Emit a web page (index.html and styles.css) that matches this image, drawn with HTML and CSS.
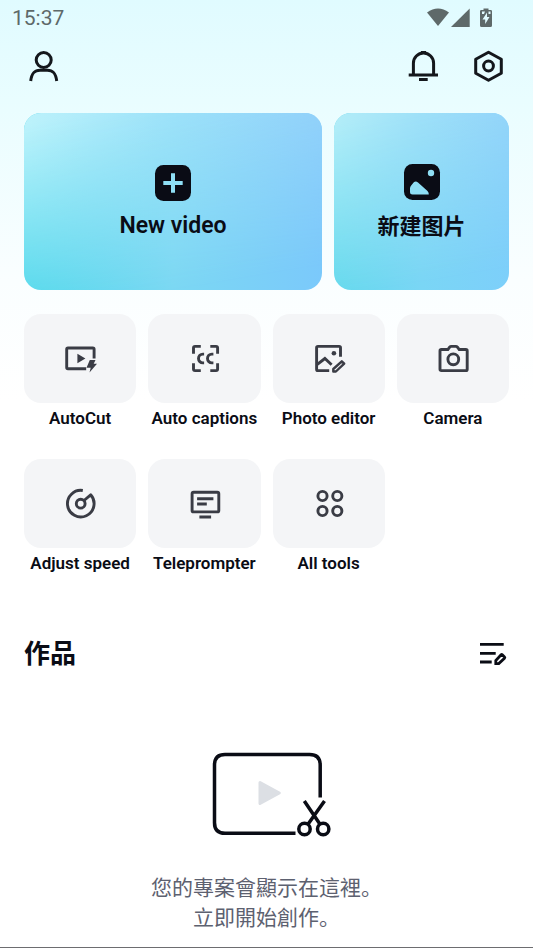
FILE: index.html
```
<!DOCTYPE html>
<html lang="en">
<head>
<meta charset="utf-8">
<meta name="viewport" content="width=device-width, initial-scale=1">
<title>作品</title>
<link rel="stylesheet" href="styles.css">
</head>
<body>
<div class="status">
  <time>15:37</time>
  <svg class="status-icons" viewBox="0 0 66 20" aria-hidden="true">
    <path d="M0 4.500Q11-3.500 22 4.500L11 18Z"/>
    <path d="M24 19L42.700 .5V19Z"/>
    <path fill-rule="evenodd" d="M56.500 .5h5v1.500h2.200q1.300 0 1.300 1.300v14.200q0 1.500-1.500 1.500h-9q-1.500 0-1.500-1.500V3.300q0-1.300 1.300-1.300h2.200zM60 4.500l-4.500 7h2.700v4.500l4.300-7h-2.500zM55 3.500v2.500h2l1-2.500zM61.500 3.500v2.500h2v-2.500z"/>
  </svg>
</div>
<header class="topbar">
  <button class="icon-button" aria-label="Profile">
    <svg viewBox="0 0 40 40"><circle cx="19.700" cy="14" r="7.500"/><path d="M6.700 35C7.700 27 10.500 24.200 16 24.200h7.400C29 24.200 31.700 27 32.700 35"/></svg>
  </button>
  <nav class="actions">
    <button class="icon-button" aria-label="Notifications">
      <svg viewBox="0 0 40 40"><path d="M10.400 29V17.200a10.100 10.100 0 0 1 20.200 0V29M5.700 29H35M16 33.400h8.700M17.800 6.500h5.400"/></svg>
    </button>
    <button class="icon-button" aria-label="Settings">
      <svg viewBox="0 0 40 40"><path stroke-linejoin="round" d="M19.500 6.200L32.300 13.200V27.200L19.500 34.200L6.700 27.200V13.200Z"/><circle cx="19.500" cy="20" r="4.900"/></svg>
    </button>
  </nav>
</header>
<main>
  <section class="create">
    <button class="card card-video">
      <svg viewBox="0 0 36 36" aria-hidden="true"><rect width="36" height="36" rx="8.500"/><path class="cut-line" d="M18 8.300v19.400M8.300 18h19.400"/></svg>
      <span>New video</span>
    </button>
    <button class="card card-image">
      <svg viewBox="0 0 36 36" aria-hidden="true"><rect width="36" height="36" rx="8.500"/><circle class="cut" cx="27" cy="9" r="3.200"/><path class="cut" d="M6 24.500q0-1.500 1-2.700l2.600-3.200q2-2.200 4.400-.2L23.500 27q1.500 1.500 1.300 3.500H8.500Q6 30.500 6 28z"/></svg>
      <span>新建图片</span>
    </button>
  </section>
  <section class="tools">
    <button class="tool">
      <span class="tile"><svg viewBox="0 0 33 33" aria-hidden="true"><path d="M30.100 16.500V7.300q0-1.300-1.300-1.300H4q-1.300 0-1.300 1.300v18.100q0 1.300 1.300 1.300h18.200"/><path class="solid" d="M13.400 11.700v9.600L21.400 16.500zM25.800 18h5.700l-1.800 3.700h3.300L25.500 30.500l1.200-4.700H22.500z"/></svg></span>
      <span>AutoCut</span>
    </button>
    <button class="tool">
      <span class="tile"><svg viewBox="0 0 33 33" aria-hidden="true"><path d="M5.500 11.700V6q0-1.600 1.600-1.600h5.700M22.300 4.400H28q1.600 0 1.600 1.600v5.700M29.600 21.300V27q0 1.600-1.600 1.600h-5.700M12.800 28.600H7.100q-1.600 0-1.600-1.600v-5.700M16.100 12.100h-1.200a4.400 4.400 0 0 0 0 8.800h1.200M25.400 12.100h-1.500a4.400 4.400 0 0 0 0 8.800h1.500"/></svg></span>
      <span>Auto captions</span>
    </button>
    <button class="tool">
      <span class="tile"><svg viewBox="0 0 33 33" aria-hidden="true"><path d="M28.500 14.700V5.800q0-1.400-1.400-1.400H6q-1.400 0-1.400 1.400v21.400q0 1.400 1.400 1.400h11.200M5 22.700L12.900 16.500L19.600 22.700"/><circle class="solid" cx="21.900" cy="11.300" r="2.300"/><path class="thin" d="M29.800 19.300l2.400 2.400L23.900 29.500H21.300V27z"/></svg></span>
      <span>Photo editor</span>
    </button>
    <button class="tool">
      <span class="tile"><svg viewBox="0 0 33 33" aria-hidden="true"><path d="M5.400 7.500h6.500l1.700-2.300q.7-.8 1.700-.8h4.500q1 0 1.700.8l1.700 2.300h6.600q1.400 0 1.400 1.400v18.300q0 1.400-1.400 1.400H5.400Q4 28.600 4 27.200V8.900q0-1.400 1.400-1.400z"/><circle cx="17.300" cy="17.300" r="5.400"/></svg></span>
      <span>Camera</span>
    </button>
    <button class="tool">
      <span class="tile"><svg viewBox="0 0 33 33" aria-hidden="true"><path stroke-linejoin="round" d="M18.800 3.500A13.300 13.300 0 1 0 26.700 7.800L20 13.500"/><circle cx="16.700" cy="16.700" r="4.400"/></svg></span>
      <span>Adjust speed</span>
    </button>
    <button class="tool">
      <span class="tile"><svg viewBox="0 0 33 33" aria-hidden="true"><rect x="4.100" y="5.300" width="26.700" height="19.600" rx="1.500"/><path d="M9.100 11.700h16.300M9.100 17h9.700M11.400 30h11.700"/></svg></span>
      <span>Teleprompter</span>
    </button>
    <button class="tool">
      <span class="tile"><svg viewBox="0 0 33 33" aria-hidden="true"><circle cx="10.500" cy="9" r="4.600"/><circle cx="25.300" cy="9" r="4.600"/><circle cx="10.500" cy="24" r="4.600"/><circle cx="25.300" cy="24" r="4.600"/></svg></span>
      <span>All tools</span>
    </button>
  </section>
  <section class="works">
    <div class="works-head">
      <h1>作品</h1>
      <button class="edit-button" aria-label="Edit"><svg viewBox="0 0 32 32"><path d="M3 7.300h23.700M3 16.300h15.700M3 25h11.700M25.300 17.800l2.200 2.200q.6.600 0 1.200L21.800 26.600h-3V23.600L24.100 17.800q.6-.6 1.200 0z"/></svg></button>
    </div>
    <div class="empty">
      <svg viewBox="0 0 128 92" aria-hidden="true"><path d="M117.200 49.500V17q0-10.600-10.600-10.600H22Q11.500 6.400 11.500 17v57.700q0 10.600 10.500 10.600h70.500"/><path class="play" d="M57 34.500L76.300 45L57 55.500z"/><path d="M101.300 53L117.200 76.500M121.500 53L104.800 76.500"/><circle cx="101.500" cy="81" r="5.700"/><circle cx="120.200" cy="81" r="5.700"/></svg>
      <p>您的專案會顯示在這裡。<br>立即開始創作。</p>
    </div>
  </section>
</main>
</body>
</html>
```
FILE: styles.css
```
* { box-sizing: border-box; }

body {
  margin: 0;
  min-height: 100vh;
  color: #0a0c15;
  background: linear-gradient(#e0fbff 0, #e9fdff 100px, #fafeff 280px, #fff 400px);
  border-bottom: 1px solid #6d6d70;
  font-family: Roboto, "Noto Sans CJK SC", sans-serif;
}

button {
  padding: 0;
  border: 0;
  background: none;
  color: inherit;
  font: inherit;
  cursor: pointer;
}

svg { display: block; overflow: visible; }

.status {
  display: flex;
  justify-content: space-between;
  align-items: center;
  height: 36px;
  padding: 0 40px 0 12px;
  color: #5e6969;
  font-size: 21px;
}

.status-icons { width: 66px; height: 20px; fill: currentColor; }

.topbar {
  display: flex;
  justify-content: space-between;
  padding: 10px 24px 0;
}

.actions { display: flex; gap: 26px; }

.icon-button svg {
  width: 40px;
  height: 40px;
  fill: none;
  stroke: #14171c;
  stroke-width: 3;
}

main { padding: 27px 24px 0; }

.create { display: flex; gap: 12px; }

.card {
  position: relative;
  display: flex;
  flex-direction: column;
  align-items: center;
  justify-content: center;
  gap: 11px;
  height: 177px;
  padding-top: 2px;
  border-radius: 17px;
  overflow: hidden;
  isolation: isolate;
  font-size: 22px;
  font-weight: 600;
  line-height: 28px;
}

/* Upper colour band, faded into the lower one */
.card::before {
  content: "";
  position: absolute;
  inset: 0;
  z-index: -1;
  -webkit-mask-image: linear-gradient(170deg, #000 5%, transparent 90%);
  mask-image: linear-gradient(170deg, #000 5%, transparent 90%);
}

.card svg { width: 36px; height: 36px; fill: #0a0c15; }
.card .cut { fill: #8fdff5; }
.card .cut-line { fill: none; stroke: #8fdff5; stroke-width: 4; }

.card-video {
  flex: 298;
  font-size: 23px;
  background: linear-gradient(90deg, #4cd7eb, #7bd8f3 50%, #7bc9fb);
}

.card-video::before { background: linear-gradient(90deg, #bcf2fb, #9fe2f9 50%, #97d3fa); }

.card-image {
  flex: 175;
  gap: 13px;
  background: linear-gradient(90deg, #63d9ed, #7ad6f5 50%, #7dcffa);
}

.card-image::before { background: linear-gradient(90deg, #b2edf8, #9fe0f8 50%, #96d5f9); }

.tools {
  display: grid;
  grid-template-columns: repeat(4, 1fr);
  gap: 31px 12px;
  margin-top: 24px;
}

.tool {
  display: flex;
  flex-direction: column;
  align-items: center;
  gap: 5px;
  min-width: 0;
  font-size: 17px;
  font-weight: 600;
  line-height: 20px;
  white-space: nowrap;
}

.tile {
  display: grid;
  place-items: center;
  width: 100%;
  height: 89px;
  border-radius: 17px;
  background: #f4f5f7;
}

.tile svg {
  width: 33px;
  height: 33px;
  fill: none;
  stroke: #3a3c45;
  stroke-width: 2.9;
}

.tile .solid { fill: #3a3c45; stroke: none; }
.tile .thin { stroke-width: 2.4; stroke-linejoin: round; }

.works { margin-top: 64px; }

.works-head {
  display: flex;
  justify-content: space-between;
  align-items: center;
}

h1 {
  margin: 0;
  padding-top: 2px;
  font-size: 26px;
  font-weight: 700;
  line-height: 30px;
}

.edit-button svg {
  width: 32px;
  height: 32px;
  fill: none;
  stroke: #0a0c15;
  stroke-width: 2.8;
}

.empty {
  display: flex;
  flex-direction: column;
  align-items: center;
  gap: 33px;
  margin-top: 79px;
}

.empty svg {
  width: 128px;
  height: 92px;
  fill: none;
  stroke: #0a0c15;
  stroke-width: 3.5;
}

.empty .play {
  fill: #dcdfe4;
  stroke: #dcdfe4;
  stroke-width: 3;
  stroke-linejoin: round;
}

.empty p {
  margin: 0;
  color: #5d6170;
  font-size: 21px;
  line-height: 30px;
  text-align: center;
}
```
